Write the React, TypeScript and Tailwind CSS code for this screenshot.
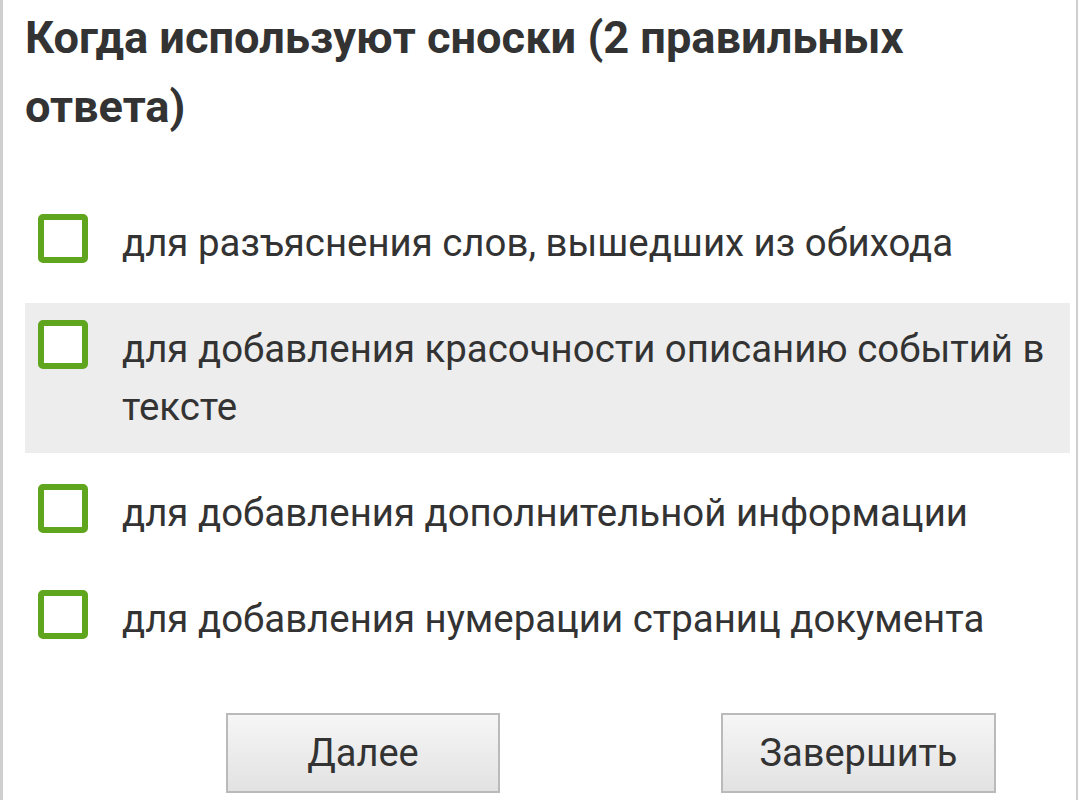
import React from "react";

const options = [
  { text: "для разъяснения слов, вышедших из обихода", hl: false },
  { text: "для добавления красочности описанию событий в тексте", hl: true },
  { text: "для добавления дополнительной информации", hl: false },
  { text: "для добавления нумерации страниц документа", hl: false },
];

export default function App() {
  return (
    <div
      className="w-[1080px] h-[800px] overflow-hidden bg-white text-[#333333]"
      style={{ fontFamily: "Roboto, 'Noto Sans', sans-serif" }}
    >
      <div className="w-[1078px] h-[800px] border-l-[3px] border-r-[2px] border-[#cfcfcf] pl-[22px] pr-[6px] pt-[3px]">
        <h1 className="text-[45.2px] leading-[69px] font-bold">
          Когда используют сноски (2 правильных ответа)
        </h1>
        <div className="mt-[56px] flex flex-col gap-[14px]">
          {options.map((o, i) => (
            <div
              key={i}
              className={`flex items-start pl-[13px] py-[17px] ${o.hl ? "bg-[#ededed]" : ""}`}
            >
              <div className="w-[50px] h-[49px] shrink-0 rounded-[5px] border-[6px] border-[#60a51e] bg-white" />
              <div className="ml-[34px] text-[38.4px] leading-[58px]">{o.text}</div>
            </div>
          ))}
        </div>
        <div className="mt-[48px] flex">
          <button className="ml-[201px] w-[274px] h-[80px] border-2 border-[#bababa] bg-gradient-to-b from-[#f6f6f6] to-[#e2e2e2] text-[38px] text-[#333333]">
            Далее
          </button>
          <button className="ml-[221px] w-[275px] h-[80px] border-2 border-[#bababa] bg-gradient-to-b from-[#f6f6f6] to-[#e2e2e2] text-[38px] text-[#333333]">
            Завершить
          </button>
        </div>
      </div>
    </div>
  );
}
